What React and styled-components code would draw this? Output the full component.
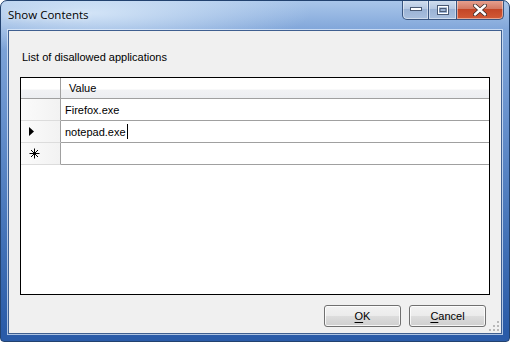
import React from "react";
import styled, { createGlobalStyle } from "styled-components";

const Global = createGlobalStyle`
  html, body { margin: 0; padding: 0; background: #ffffff; }
  body { width: 510px; height: 342px; overflow: hidden; font-family: "Liberation Sans", Arial, sans-serif; }
`;

const Window = styled.div`
  width: 510px;
  height: 342px;
  box-sizing: border-box;
  display: flex;
  flex-direction: column;
  border-radius: 7px 7px 4px 4px;
  border: 1px solid #22426f;
  background:
    radial-gradient(ellipse 220px 40px at 90px 12px, rgba(220, 235, 250, 0.85), rgba(220, 235, 250, 0) 100%),
    linear-gradient(180deg, #a9c6ea 0px, #82a7da 28px, #6690cc 120px, #3f6fb5 250px, #2a5ba8 330px);
  overflow: hidden;
`;

const TitleBar = styled.div`
  height: 29px;
  display: flex;
  align-items: flex-start;
  justify-content: space-between;
  padding-left: 7px;
`;

const Title = styled.div`
  font-family: "Open Sans", "Noto Sans", sans-serif;
  font-size: 11.5px;
  color: #000;
  margin-top: 6px;
  text-shadow: 0 0 6px rgba(255, 255, 255, 0.9);
`;

const Caption = styled.div`
  display: flex;
  height: 20px;
  margin-right: 5px;
  margin-top: -1px;
`;

const CapBtn = styled.div`
  width: ${(p) => p.w}px;
  height: 20px;
  box-sizing: border-box;
  display: flex;
  align-items: center;
  justify-content: center;
  border: 1px solid #3a5680;
  border-top: none;
  border-left: ${(p) => (p.first ? "1px solid #3a5680" : "none")};
  border-radius: ${(p) => (p.first ? "0 0 0 5px" : p.last ? "0 0 5px 0" : "0")};
  background: ${(p) =>
    p.close
      ? "linear-gradient(180deg, #e8a493 0%, #d47a64 45%, #c44627 50%, #d25a36 100%)"
      : "linear-gradient(180deg, #d3e0f0 0%, #b5c8e2 45%, #9bb3d5 50%, #a9c0de 100%)"};
  box-shadow: inset 0 0 0 1px rgba(255, 255, 255, 0.45);
`;

const Client = styled.div`
  flex: 1;
  margin: 0 7px 7px 7px;
  background: #f0f0f0;
  border: 1px solid #3f5f90;
  box-shadow: 0 0 0 1px rgba(230, 240, 252, 0.7);
  display: flex;
  flex-direction: column;
  padding: 0 11px 0 11px;
  position: relative;
`;

const Label = styled.div`
  font-size: 11px;
  color: #000;
  margin-top: 20px;
  padding-left: 2px;
  height: 15px;
`;

const Grid = styled.div`
  margin-top: 11px;
  height: 218px;
  box-sizing: border-box;
  border: 1px solid #000;
  background: #fff;
  display: flex;
  flex-direction: column;
`;

const Row = styled.div`
  display: grid;
  grid-template-columns: 40px 1fr;
  height: ${(p) => (p.header ? 21 : 22)}px;
  flex-shrink: 0;
`;

const RowHead = styled.div`
  box-sizing: border-box;
  border-right: 1px solid #a0a0a0;
  border-bottom: 1px solid ${(p) => (p.header ? "#a0a0a0" : "#dcdcdc")};
  background: ${(p) =>
    p.header
      ? "linear-gradient(180deg, #ffffff 0%, #ffffff 55%, #f1f2f4 60%, #eceef1 100%)"
      : "linear-gradient(90deg, #fbfbfb 0%, #f2f2f2 100%)"};
  display: flex;
  align-items: center;
  padding-left: 8px;
`;

const ColHead = styled.div`
  box-sizing: border-box;
  border-bottom: 1px solid #a0a0a0;
  background: linear-gradient(180deg, #ffffff 0%, #ffffff 55%, #f1f2f4 60%, #eceef1 100%);
  font-size: 11px;
  display: flex;
  align-items: center;
  padding-left: 8px;
  color: #000;
`;

const Cell = styled.div`
  box-sizing: border-box;
  border-bottom: 1px solid #a0a0a0;
  font-size: 11px;
  display: flex;
  align-items: center;
  padding-left: 4px;
  color: #000;
`;

const Caret = styled.span`
  display: inline-block;
  width: 1px;
  height: 15px;
  background: #000;
  margin-left: 1px;
`;

const Footer = styled.div`
  display: flex;
  justify-content: flex-end;
  gap: 8px;
  margin-top: 10px;
  padding-right: 4px;
`;

const Button = styled.div`
  width: 77px;
  height: 22px;
  box-sizing: border-box;
  border: 1px solid #707070;
  border-radius: 3px;
  background: linear-gradient(180deg, #f2f2f2 0%, #ebebeb 50%, #dddddd 50%, #cfcfcf 100%);
  box-shadow: inset 0 0 0 1px rgba(255, 255, 255, 0.8);
  font-size: 11px;
  display: flex;
  align-items: center;
  justify-content: center;
  color: #000;
  u { text-decoration: underline; text-underline-offset: 2px; }
`;

const Grip = styled.svg`
  position: absolute;
  right: 1px;
  bottom: 1px;
`;

export default function App() {
  return (
    <>
      <Global />
      <Window>
        <TitleBar>
          <Title>Show Contents</Title>
          <Caption>
            <CapBtn w={27} first>
              <svg width="12" height="5" viewBox="0 0 12 5">
                <rect x="0.5" y="0.5" width="11" height="3" fill="#fff" stroke="#4a5a74" strokeWidth="1" />
              </svg>
            </CapBtn>
            <CapBtn w={28}>
              <svg width="12" height="10" viewBox="0 0 12 10">
                <rect x="0.5" y="0.5" width="11" height="9" fill="none" stroke="#4a5a74" />
                <rect x="1.5" y="1.5" width="9" height="7" fill="none" stroke="#fff" strokeWidth="1" />
                <rect x="3" y="3.5" width="6" height="3" fill="none" stroke="#4a5a74" />
              </svg>
            </CapBtn>
            <CapBtn w={47} close last>
              <svg width="14" height="12" viewBox="0 0 14 12">
                <path d="M2 1.5 L12 10.5 M12 1.5 L2 10.5" stroke="#3a2a28" strokeWidth="4" strokeLinecap="round" />
                <path d="M2 1.5 L12 10.5 M12 1.5 L2 10.5" stroke="#fff" strokeWidth="2.4" strokeLinecap="round" />
              </svg>
            </CapBtn>
          </Caption>
        </TitleBar>
        <Client>
          <Label>List of disallowed applications</Label>
          <Grid>
            <Row header>
              <RowHead header />
              <ColHead>Value</ColHead>
            </Row>
            <Row>
              <RowHead />
              <Cell>Firefox.exe</Cell>
            </Row>
            <Row>
              <RowHead>
                <svg width="5" height="9" viewBox="0 0 5 9">
                  <path d="M0 0 L5 4.5 L0 9 Z" fill="#000" />
                </svg>
              </RowHead>
              <Cell>
                notepad.exe<Caret />
              </Cell>
            </Row>
            <Row>
              <RowHead>
                <svg width="11" height="11" viewBox="0 0 11 11">
                  <path d="M5.5 0.5 V10.5 M0.5 5.5 H10.5 M2 2 L9 9 M9 2 L2 9" stroke="#000" strokeWidth="1" />
                </svg>
              </RowHead>
              <Cell />
            </Row>
          </Grid>
          <Footer>
            <Button>
              <span><u>O</u>K</span>
            </Button>
            <Button>
              <span><u>C</u>ancel</span>
            </Button>
          </Footer>
          <Grip width="12" height="12" viewBox="0 0 12 12">
            {[
              [9, 1], [9, 5], [9, 9], [5, 5], [5, 9], [1, 9],
            ].map(([x, y], i) => (
              <rect key={i} x={x} y={y} width="2" height="2" fill="#b8b8b8" />
            ))}
          </Grip>
        </Client>
      </Window>
    </>
  );
}
